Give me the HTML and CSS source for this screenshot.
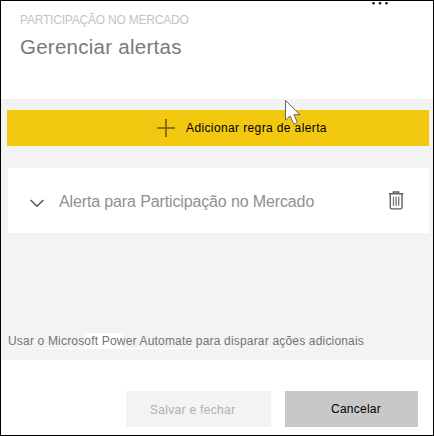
FILE: index.html
```html
<!DOCTYPE html>
<html lang="pt">
<head>
<meta charset="utf-8">
<title>Gerenciar alertas</title>
<link rel="stylesheet" href="styles.css">
</head>
<body>
<div class="panel">
  <header class="header">
    <div class="eyebrow">PARTICIPAÇÃO NO MERCADO</div>
    <h1 class="title">Gerenciar alertas</h1>
    <svg class="more" width="18" height="4" viewBox="0 0 18 4"><circle cx="2.5" cy="2.2" r="1.25"/><circle cx="9" cy="2.2" r="1.25"/><circle cx="15.5" cy="2.2" r="1.25"/></svg>
  </header>
  <main class="content">
    <button class="add">
      <svg class="plus" width="18" height="18" viewBox="0 0 18 18"><path d="M0 9H18M9 0V18"/></svg>
      <span class="add-label">Adicionar regra de alerta</span>
    </button>
    <section class="card">
      <svg class="chevron" width="14" height="9" viewBox="0 0 14 9"><path d="M.6 1 7 7.3 13.4 1"/></svg>
      <span class="card-label">Alerta para Participação no Mercado</span>
      <svg class="trash" width="16" height="19" viewBox="0 0 16 19"><path d="M1 2.8H15.3M5.3 2.8V1H10.7V2.8M2.3 3V16.2Q2.3 17.9 4 17.9H12.3Q14 17.9 14 16.2V3"/><path class="slats" d="M5.5 5.5V14.7M8.1 5.5V14.7M10.7 5.5V14.7"/></svg>
    </section>
    <p class="note">Usar o Microsoft Power Automate para disparar ações adicionais</p>
  </main>
  <footer class="footer">
    <button class="save">Salvar e fechar</button>
    <button class="cancel">Cancelar</button>
  </footer>
  <svg class="cursor" width="18" height="27" viewBox="0 0 18 27"><path d="M1.5 1.5V21L6 17 9.6 24.6Q11.5 25.6 13.3 23.4L10 15.7H16Z"/></svg>
</div>
</body>
</html>
```
FILE: styles.css
```css
* { box-sizing: border-box; }
body { margin: 0; font-family: "Liberation Sans", Arial, sans-serif; }
.panel { position: relative; width: 434px; height: 436px; border: 1px solid #000; background: #fff; overflow: hidden; display: flex; flex-direction: column; }
.header { height: 98px; padding: 11px 19px 0; }
.eyebrow { font-size: 12px; line-height: 16px; color: #c3c3c3; white-space: nowrap; letter-spacing: -0.21px; }
.title { margin: 7px 0 0; font-size: 20.5px; line-height: 24px; font-weight: 400; color: #7a7a7a; letter-spacing: 0.26px; }
.more { position: absolute; left: 370px; top: 0; fill: #111; }
.content { height: 261px; background: #f3f3f3; padding: 11px 4px 0 6px; }
button { border: 0; padding: 0; margin: 0; font-family: inherit; font-size: 12px; white-space: nowrap; }
.add { display: flex; align-items: center; width: 422px; height: 36px; padding-left: 150px; background: #f2c811; color: #000; }
.plus { fill: none; stroke: #705d0b; stroke-width: 1.6; }
.add-label { margin-left: 11px; letter-spacing: 0.38px; }
.card { display: flex; align-items: center; width: 421px; height: 65px; margin: 22px 0 0 1px; padding: 0 25px 0 22px; background: #fff; }
.chevron { margin-top: 5px; fill: none; stroke: #555; stroke-width: 1.5; }
.card-label { margin: 2px 0 0 15px; font-size: 16px; color: #909090; white-space: nowrap; letter-spacing: -0.13px; }
.trash { margin-left: auto; fill: none; stroke: #606060; stroke-width: 1.4; }
.slats { stroke: #777; stroke-width: 1.3; }
.note {
  margin: 99px 0 0 1px; height: 17px; font-size: 12px; line-height: 19px; color: #737373; white-space: nowrap; letter-spacing: 0.18px;
  background:
    linear-gradient(#fff, #fff) 76px 1px / 39px 15px no-repeat,
    linear-gradient(#fff, #fff) 29px 16px / 164px 1px no-repeat,
    linear-gradient(#fff, #fff) 251px 16px / 48px 1px no-repeat;
}
.footer { display: flex; gap: 14px; padding: 31px 0 0 125px; }
.save { width: 145px; height: 36px; background: #f3f3f3; color: #b0b0b0; padding: 1px 0 0 24px; text-align: left; letter-spacing: 0.3px; }
.cancel { width: 133px; height: 36px; background: #c8c8c8; color: #000; padding-left: 46px; text-align: left; letter-spacing: 0.25px; }
.cursor { position: absolute; left: 283px; top: 98px; fill: #fff; stroke: #666; stroke-width: 1; }
```
